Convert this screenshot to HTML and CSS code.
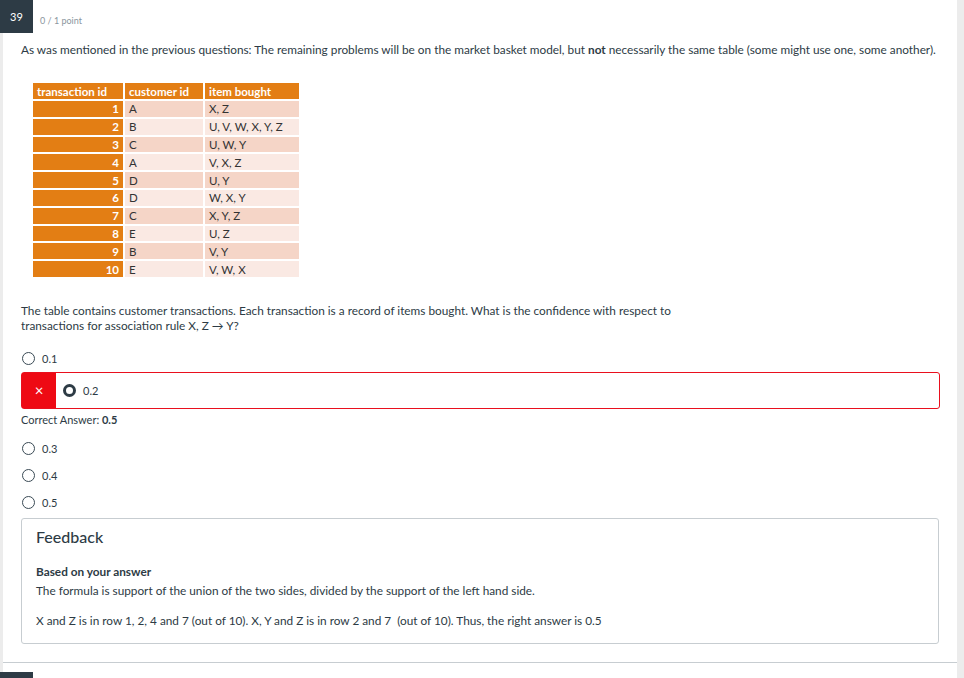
FILE: index.html
```html
<!DOCTYPE html>
<html>
<head>
<meta charset="utf-8">
<link rel="stylesheet" href="styles.css">
</head>
<body>
<div class="page">
  <div class="question">
    <div class="q-header">
      <div class="q-num">39</div>
      <div class="q-points">0 / 1 point</div>
    </div>
    <p class="intro">As was mentioned in the previous questions: The remaining problems will be on the market basket model, but <b>not</b> necessarily the same table (some might use one, some another).</p>
    <table class="tx">
      <tr class="head"><th class="c1">transaction id</th><th class="c2">customer id</th><th class="c3">item bought</th></tr>
      <tr class="dark"><td class="id">1</td><td>A</td><td>X, Z</td></tr>
      <tr class="light"><td class="id">2</td><td>B</td><td>U, V, W, X, Y, Z</td></tr>
      <tr class="dark"><td class="id">3</td><td>C</td><td>U, W, Y</td></tr>
      <tr class="light"><td class="id">4</td><td>A</td><td>V, X, Z</td></tr>
      <tr class="dark"><td class="id">5</td><td>D</td><td>U, Y</td></tr>
      <tr class="light"><td class="id">6</td><td>D</td><td>W, X, Y</td></tr>
      <tr class="dark"><td class="id">7</td><td>C</td><td>X, Y, Z</td></tr>
      <tr class="light"><td class="id">8</td><td>E</td><td>U, Z</td></tr>
      <tr class="dark"><td class="id">9</td><td>B</td><td>V, Y</td></tr>
      <tr class="light"><td class="id">10</td><td>E</td><td>V, W, X</td></tr>
    </table>
    <p class="qtext">The table contains customer transactions. Each transaction is a record of items bought. What is the confidence with respect to transactions for association rule X, Z &#8594; Y?</p>
    <div class="answers">
      <div class="opt"><span class="radio"></span><span class="val">0.1</span></div>
      <div class="opt wrong"><span class="mark">&#215;</span><span class="radio sel"></span><span class="val">0.2</span></div>
      <div class="correct">Correct Answer: <b>0.5</b></div>
      <div class="opt"><span class="radio"></span><span class="val">0.3</span></div>
      <div class="opt"><span class="radio"></span><span class="val">0.4</span></div>
      <div class="opt"><span class="radio"></span><span class="val">0.5</span></div>
    </div>
    <div class="feedback">
      <h3>Feedback</h3>
      <div class="fb-title">Based on your answer</div>
      <p class="fb-line">The formula is support of the union of the two sides, divided by the support of the left hand side.</p>
      <p class="fb-line second">X and Z is in row 1, 2, 4 and 7 (out of 10). X, Y and Z is in row 2 and 7&nbsp; (out of 10). Thus, the right answer is 0.5</p>
    </div>
  </div>
  <div class="next">
    <div class="q-num small"></div>
  </div>
</div>
</body>
</html>
```

FILE: styles.css
```css
html, body {
  margin: 0;
  padding: 0;
}
body {
  background: #ececec;
  font-family: Lato, "Open Sans", "Liberation Sans", sans-serif;
  color: #2d3b45;
  height: 678px;
  overflow: hidden;
}
.page {
  margin-left: 3px;
  width: 954px;
  background: #fff;
  height: 678px;
}
.question {
  border-bottom: 1px solid #c7cdd1;
  padding-bottom: 18px;
}
.q-header {
  display: flex;
  align-items: center;
  height: 33px;
}
.q-num {
  margin-left: -3px;
  width: 33px;
  height: 33px;
  background: #2d3b45;
  color: #fff;
  font-size: 11px;
  display: flex;
  align-items: center;
  justify-content: center;
}
.q-points {
  margin-left: 7px;
  font-size: 9px;
  color: #8b969e;
  padding-top: 7px;
}
.intro {
  margin: 9px 0 0 18px;
  font-size: 11.8px;
  line-height: 15px;
}
.tx {
  border-collapse: separate;
  border-spacing: 2px;
  margin: 24px 0 0 28px;
  font-family: Lato, "Open Sans", sans-serif;
  font-size: 11.5px;
  color: #333;
}
.tx th, .tx td {
  padding: 0 4px;
  height: 15.8px;
  line-height: 15px;
  text-align: left;
}
.tx th {
  background: #e37e14;
  color: #fff;
  font-weight: 700;
  height: 16px;
  font-size: 11.5px;
}
.tx .c1 { width: 82px; }
.tx .c2 { width: 70px; }
.tx .c3 { width: 86px; }
.tx td.id {
  background: #e37e14;
  color: #fff;
  font-weight: 700;
  text-align: right;
  font-size: 11.5px;
}
.tx tr.dark td { background-color: #f5d5c7; }
.tx tr.light td { background-color: #fae9e3; }
.tx tr.dark td.id, .tx tr.light td.id { background-color: #e37e14; }
.qtext {
  margin: 24px 0 0 18px;
  width: 690px;
  font-size: 11.8px;
  line-height: 15px;
}
.answers {
  margin-top: 12px;
  margin-left: 18px;
}
.opt {
  display: flex;
  align-items: center;
  height: 27px;
  font-size: 11px;
}
.radio {
  display: inline-block;
  box-sizing: border-box;
  width: 13px;
  height: 13px;
  border: 1.3px solid #3a4a55;
  border-radius: 50%;
  margin-left: 1px;
  margin-right: 7px;
}
.radio.sel {
  border: 3.5px solid #2d3b45;
}
.val {
  color: #2d3b45;
}
.opt.wrong {
  width: 917px;
  height: 35px;
  border: 1px solid #e9101e;
  border-radius: 3px;
  margin-left: 0;
  margin-top: 0;
}
.mark {
  width: 34px;
  height: 35px;
  background: #ee0a14;
  color: #fff;
  font-size: 15px;
  display: flex;
  align-items: center;
  justify-content: center;
  margin-right: 7px;
}
.wrong .radio { margin-left: 0; }
.correct {
  font-size: 11px;
  height: 20px;
  line-height: 20px;
  margin-top: 1px;
  margin-bottom: 5px;
}
.correct b { font-weight: 700; }
.feedback {
  margin: 2px 0 0 18px;
  width: 918px;
  border: 1px solid #c7cdd1;
  border-radius: 3px;
  padding: 8px 14px 12px;
  box-sizing: border-box;
  height: 126px;
}
.feedback h3 {
  margin: 0;
  font-size: 16px;
  font-weight: 500;
  line-height: 20px;
}
.fb-title {
  margin-top: 18px;
  font-size: 11.8px;
  font-weight: 700;
  line-height: 13px;
}
.fb-line {
  margin: 6px 0 0;
  font-size: 11.8px;
  line-height: 13px;
}
.fb-line.second {
  margin-top: 17px;
}
.next {
  padding-top: 9px;
}
.q-num.small {
  height: 10px;
}
```
